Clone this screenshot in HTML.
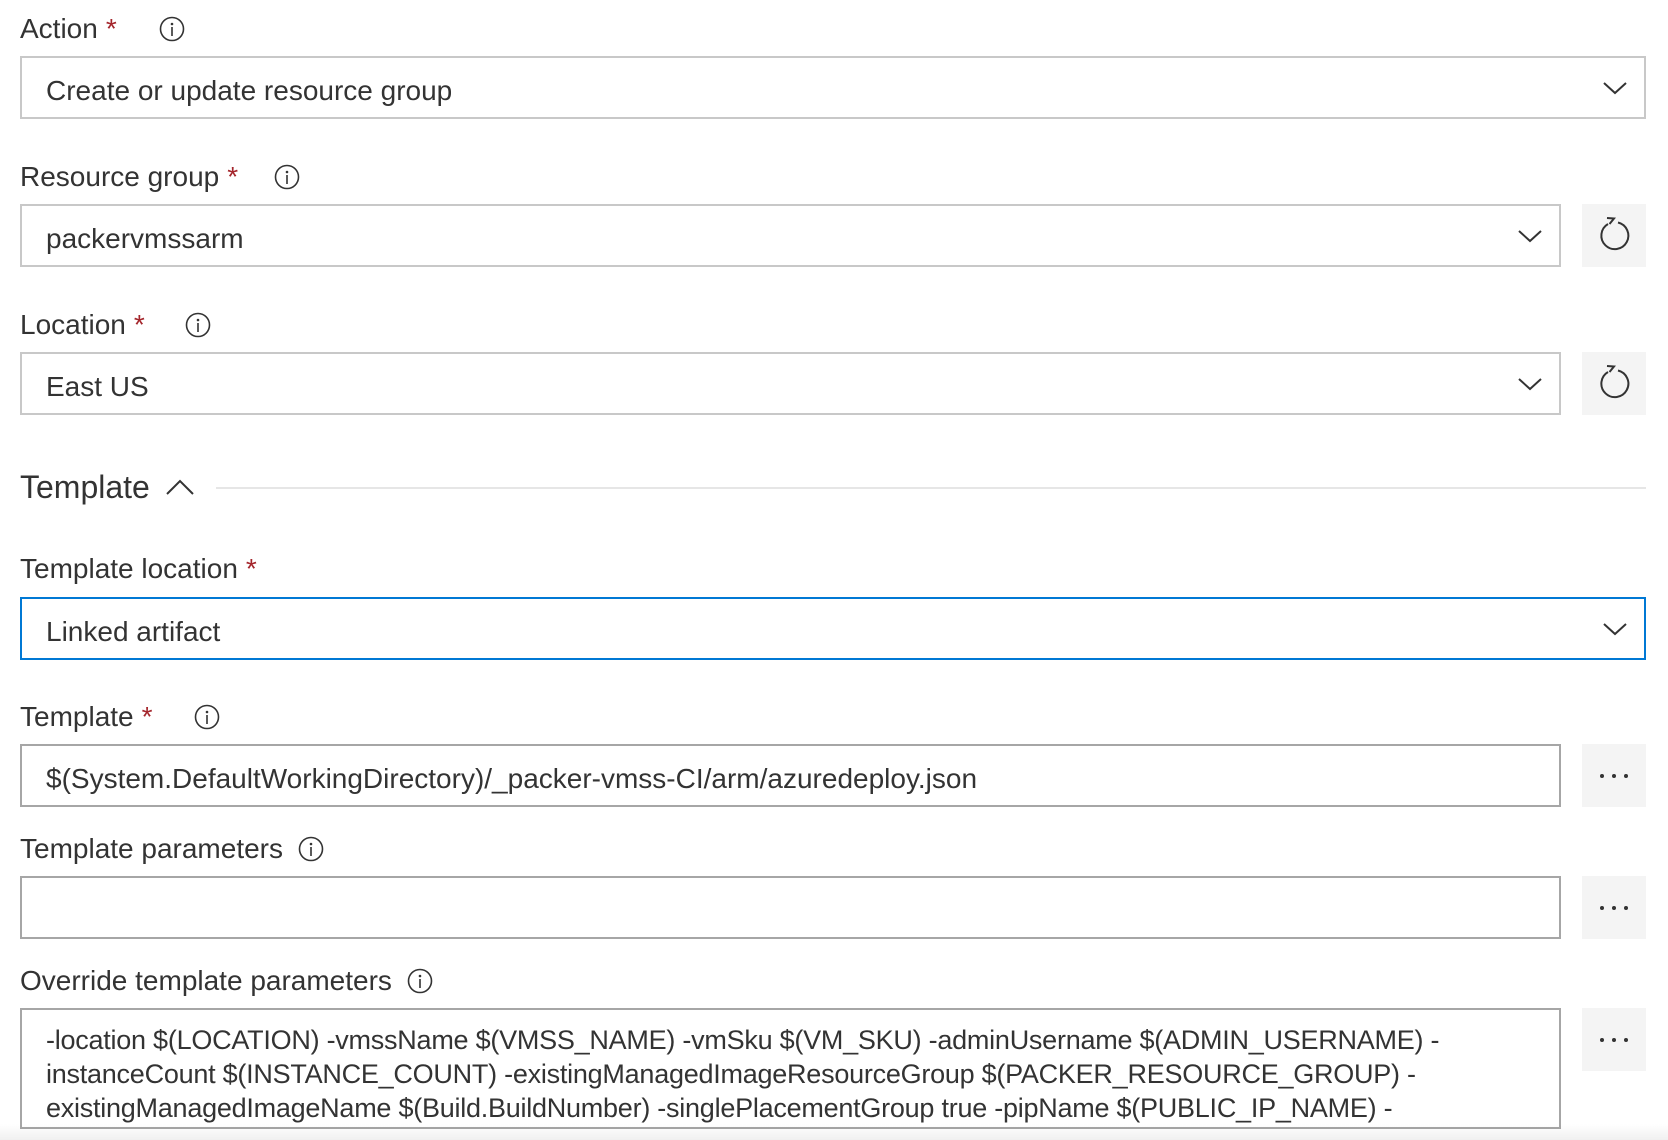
<!DOCTYPE html>
<html><head><meta charset="utf-8"><style>
*{margin:0;padding:0;box-sizing:border-box}
body{width:1668px;height:1140px;background:#fff;position:relative;overflow:hidden;font-family:"Segoe UI","Liberation Sans",sans-serif;color:#333}
.lbl{position:absolute;left:20px;font-size:28px;line-height:36px;color:#333;white-space:nowrap}
.lbl .req{color:#a4262c;margin-left:8px}
.info{position:absolute;width:26px;height:26px}
.box{position:absolute;left:20px;border:2px solid #c8c8c8;background:#fff;font-size:28px;color:#333;padding-left:24px;white-space:nowrap}
.box.dk{border-color:#a6a6a6}
.box .t{position:absolute;left:24px;top:50%;transform:translateY(-50%);margin-top:3px}
.chev{position:absolute;right:16px;top:50%;margin-top:-8px}
.btn{position:absolute;left:1582px;width:64px;height:63px;background:#f4f4f4}
.btn svg{position:absolute;left:0;top:0}
</style></head><body>
<svg width="0" height="0" style="position:absolute"><defs>
<symbol id="i" viewBox="0 0 26 26"><circle cx="13" cy="13" r="11.5" fill="none" stroke="#333" stroke-width="1.6"/><circle cx="13" cy="8" r="1.3" fill="#333"/><rect x="12.2" y="11" width="1.6" height="9" fill="#333"/></symbol>
<symbol id="c" viewBox="0 0 26 16"><path d="M2 3 L13 13 L24 3" fill="none" stroke="#333" stroke-width="2"/></symbol>
<symbol id="r" viewBox="0 0 64 63"><path d="M26 20 A13.5 13.5 0 1 0 36 18.5" fill="none" stroke="#333" stroke-width="2"/><path d="M25 14 L32 14.5 L27.5 20" fill="none" stroke="#333" stroke-width="2"/></symbol>
</defs></svg>

<div class="lbl" style="top:11px">Action<span class="req">*</span></div>
<svg class="info" style="left:159px;top:16px"><use href="#i"/></svg>
<div class="box" style="top:56px;width:1626px;height:63px"><span class="t">Create or update resource group</span><svg class="chev" width="26" height="16"><use href="#c"/></svg></div>

<div class="lbl" style="top:159px">Resource group<span class="req">*</span></div>
<svg class="info" style="left:274px;top:164px"><use href="#i"/></svg>
<div class="box" style="top:204px;width:1541px;height:63px"><span class="t">packervmssarm</span><svg class="chev" width="26" height="16"><use href="#c"/></svg></div>
<div class="btn" style="top:204px"><svg width="64" height="63"><use href="#r"/></svg></div>

<div class="lbl" style="top:307px">Location<span class="req">*</span></div>
<svg class="info" style="left:185px;top:312px"><use href="#i"/></svg>
<div class="box" style="top:352px;width:1541px;height:63px"><span class="t">East US</span><svg class="chev" width="26" height="16"><use href="#c"/></svg></div>
<div class="btn" style="top:352px"><svg width="64" height="63"><use href="#r"/></svg></div>

<div class="lbl" style="top:467px;font-size:32px;line-height:40px">Template</div>
<svg style="position:absolute;left:165px;top:478px" width="30" height="18"><path d="M2 16 L15 3 L28 16" fill="none" stroke="#333" stroke-width="2"/></svg>
<div style="position:absolute;left:216px;top:487px;width:1430px;height:2px;background:#e6e6e6"></div>

<div class="lbl" style="top:551px">Template location<span class="req">*</span></div>
<div class="box" style="top:597px;width:1626px;height:63px;border-color:#0078d4"><span class="t">Linked artifact</span><svg class="chev" width="26" height="16"><use href="#c"/></svg></div>

<div class="lbl" style="top:699px">Template<span class="req">*</span></div>
<svg class="info" style="left:194px;top:704px"><use href="#i"/></svg>
<div class="box dk" style="top:744px;width:1541px;height:63px"><span class="t">$(System.DefaultWorkingDirectory)/_packer-vmss-CI/arm/azuredeploy.json</span></div>
<div class="btn" style="top:744px"><svg width="64" height="63"><circle cx="20" cy="32" r="2" fill="#333"/><circle cx="32" cy="32" r="2" fill="#333"/><circle cx="44" cy="32" r="2" fill="#333"/></svg></div>

<div class="lbl" style="top:831px">Template parameters</div>
<svg class="info" style="left:298px;top:836px"><use href="#i"/></svg>
<div class="box dk" style="top:876px;width:1541px;height:63px"></div>
<div class="btn" style="top:876px"><svg width="64" height="63"><circle cx="20" cy="32" r="2" fill="#333"/><circle cx="32" cy="32" r="2" fill="#333"/><circle cx="44" cy="32" r="2" fill="#333"/></svg></div>

<div class="lbl" style="top:963px">Override template parameters</div>
<svg class="info" style="left:407px;top:968px"><use href="#i"/></svg>
<div class="box dk" style="top:1008px;width:1541px;height:121px;overflow:hidden">
<div style="position:absolute;left:24px;top:13px;line-height:34px;font-size:27px;letter-spacing:-0.25px">-location $(LOCATION) -vmssName $(VMSS_NAME) -vmSku $(VM_SKU) -adminUsername $(ADMIN_USERNAME) -<br>instanceCount $(INSTANCE_COUNT) -existingManagedImageResourceGroup $(PACKER_RESOURCE_GROUP) -<br>existingManagedImageName $(Build.BuildNumber) -singlePlacementGroup true -pipName $(PUBLIC_IP_NAME) -</div></div>
<div class="btn" style="top:1008px"><svg width="64" height="63"><circle cx="20" cy="32" r="2" fill="#333"/><circle cx="32" cy="32" r="2" fill="#333"/><circle cx="44" cy="32" r="2" fill="#333"/></svg></div>

<div style="position:absolute;left:0;top:1124px;width:1668px;height:16px;background:linear-gradient(to bottom,rgba(0,0,0,0),rgba(0,0,0,0.06))"></div>
</body></html>
